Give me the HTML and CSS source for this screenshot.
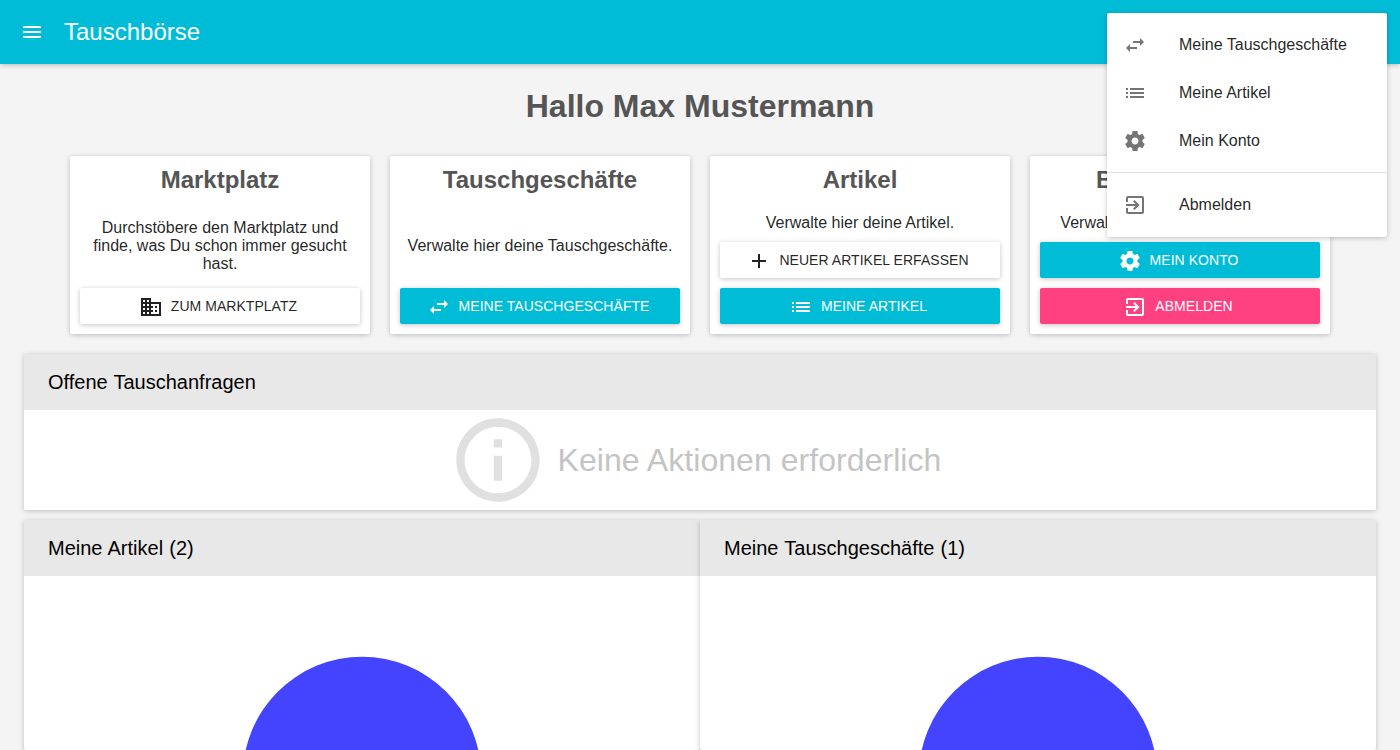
FILE: index.html
```html
<!DOCTYPE html>
<html lang="de">
<head>
<meta charset="utf-8">
<title>Tauschbörse</title>
<link rel="stylesheet" href="styles.css">
</head>
<body>
<svg class="sprite" aria-hidden="true">
  <symbol id="menu" viewBox="0 0 24 24"><path d="M3 18h18v-2H3v2zm0-5h18v-2H3v2zm0-7v2h18V6H3z"/></symbol>
  <symbol id="swap" viewBox="0 0 24 24"><path d="M6.99 11L3 15l3.99 4v-3H14v-2H6.99v-3zM21 9l-3.99-4v3H10v2h7.01v3L21 9z"/></symbol>
  <symbol id="list" viewBox="0 0 24 24"><path d="M3 13h2v-2H3v2zm0 4h2v-2H3v2zm0-8h2V7H3v2zm4 4h14v-2H7v2zm0 4h14v-2H7v2zM7 7v2h14V7H7z"/></symbol>
  <symbol id="settings" viewBox="0 0 24 24"><path d="M19.43 12.98c.04-.32.07-.64.07-.98s-.03-.66-.07-.98l2.11-1.65c.19-.15.24-.42.12-.64l-2-3.46c-.12-.22-.39-.3-.61-.22l-2.49 1c-.52-.4-1.08-.73-1.69-.98l-.38-2.65C14.46 2.18 14.25 2 14 2h-4c-.25 0-.46.18-.49.42l-.38 2.65c-.61.25-1.17.59-1.69.98l-2.49-1c-.23-.09-.49 0-.61.22l-2 3.46c-.13.22-.07.49.12.64l2.11 1.65c-.04.32-.07.65-.07.98s.03.66.07.98l-2.11 1.65c-.19.15-.24.42-.12.64l2 3.46c.12.22.39.3.61.22l2.49-1c.52.4 1.08.73 1.69.98l.38 2.65c.03.24.24.42.49.42h4c.25 0 .46-.18.49-.42l.38-2.65c.61-.25 1.17-.59 1.69-.98l2.49 1c.23.09.49 0 .61-.22l2-3.46c.12-.22.07-.49-.12-.64l-2.11-1.65zM12 15.5c-1.93 0-3.5-1.57-3.5-3.5s1.57-3.5 3.5-3.5 3.5 1.57 3.5 3.5-1.57 3.5-3.5 3.5z"/></symbol>
  <symbol id="exit" viewBox="0 0 24 24"><path d="M10.09 15.59L11.5 17l5-5-5-5-1.41 1.41L12.67 11H3v2h9.67l-2.58 2.59zM19 3H5c-1.11 0-2 .9-2 2v4h2V5h14v14H5v-4H3v4c0 1.1.89 2 2 2h14c1.1 0 2-.9 2-2V5c0-1.1-.9-2-2-2z"/></symbol>
  <symbol id="business" viewBox="0 0 24 24"><path d="M12 7V3H2v18h20V7H12zM6 19H4v-2h2v2zm0-4H4v-2h2v2zm0-4H4V9h2v2zm0-4H4V5h2v2zm4 12H8v-2h2v2zm0-4H8v-2h2v2zm0-4H8V9h2v2zm0-4H8V5h2v2zm10 12h-8v-2h2v-2h-2v-2h2v-2h-2V9h8v10zm-2-8h-2v2h2v-2zm0 4h-2v2h2v-2z"/></symbol>
  <symbol id="add" viewBox="0 0 24 24"><path d="M19 13h-6v6h-2v-6H5v-2h6V5h2v6h6v2z"/></symbol>
  <symbol id="info" viewBox="0 0 24 24"><path d="M11 17h2v-6h-2v6zm1-15C6.48 2 2 6.48 2 12s4.480 10 10 10 10-4.480 10-10S17.520 2 12 2zm0 18c-4.410 0-8-3.590-8-8s3.590-8 8-8 8 3.590 8 8-3.590 8-8 8zM11 9h2V7h-2v2z"/></symbol>
</svg>

<header class="appbar">
  <svg class="icon"><use href="#menu"/></svg>
  <span class="appbar-title">Tauschbörse</span>
</header>

<main>
  <h1 class="greeting">Hallo Max Mustermann</h1>

  <section class="cards">
    <article class="card">
      <h2 class="card-title">Marktplatz</h2>
      <p class="card-text">Durchstöbere den Marktplatz und finde, was Du schon immer gesucht hast.</p>
      <div class="actions">
        <a class="button"><svg class="icon"><use href="#business"/></svg><span>ZUM MARKTPLATZ</span></a>
      </div>
    </article>
    <article class="card">
      <h2 class="card-title">Tauschgeschäfte</h2>
      <p class="card-text">Verwalte hier deine Tauschgeschäfte.</p>
      <div class="actions">
        <a class="button primary"><svg class="icon"><use href="#swap"/></svg><span>MEINE TAUSCHGESCHÄFTE</span></a>
      </div>
    </article>
    <article class="card">
      <h2 class="card-title">Artikel</h2>
      <p class="card-text">Verwalte hier deine Artikel.</p>
      <div class="actions">
        <a class="button"><svg class="icon"><use href="#add"/></svg><span>NEUER ARTIKEL ERFASSEN</span></a>
        <a class="button primary"><svg class="icon"><use href="#list"/></svg><span>MEINE ARTIKEL</span></a>
      </div>
    </article>
    <article class="card">
      <h2 class="card-title">Benutzerkonto</h2>
      <p class="card-text">Verwalte hier dein Benutzerkonto.</p>
      <div class="actions">
        <a class="button primary"><svg class="icon"><use href="#settings"/></svg><span>MEIN KONTO</span></a>
        <a class="button secondary"><svg class="icon"><use href="#exit"/></svg><span>ABMELDEN</span></a>
      </div>
    </article>
  </section>

  <section class="panels">
    <article class="panel wide">
      <h3 class="panel-title">Offene Tauschanfragen</h3>
      <div class="empty">
        <svg class="empty-icon"><use href="#info"/></svg>
        <span>Keine Aktionen erforderlich</span>
      </div>
    </article>
    <article class="panel">
      <h3 class="panel-title">Meine Artikel (2)</h3>
      <div class="chart"><svg class="pie" viewBox="0 0 240 240"><circle cx="120" cy="120" r="119.200"/></svg></div>
    </article>
    <article class="panel">
      <h3 class="panel-title">Meine Tauschgeschäfte (1)</h3>
      <div class="chart"><svg class="pie" viewBox="0 0 240 240"><circle cx="120" cy="120" r="119.200"/></svg></div>
    </article>
  </section>
</main>

<nav class="menu">
  <a class="menu-item"><svg class="icon"><use href="#swap"/></svg><span>Meine Tauschgeschäfte</span></a>
  <a class="menu-item"><svg class="icon"><use href="#list"/></svg><span>Meine Artikel</span></a>
  <a class="menu-item"><svg class="icon"><use href="#settings"/></svg><span>Mein Konto</span></a>
  <hr class="divider">
  <a class="menu-item"><svg class="icon"><use href="#exit"/></svg><span>Abmelden</span></a>
</nav>
</body>
</html>
```

FILE: styles.css
```css
* {
  box-sizing: border-box;
}

body {
  margin: 0;
  height: 750px;
  overflow: hidden;
  background: #f4f4f4;
  color: rgba(0, 0, 0, 0.87);
  font: 16px/18px "Liberation Sans", Arial, sans-serif;
}

h1, h2, h3, p {
  margin: 0;
}

.sprite {
  display: none;
}

.icon {
  width: 24px;
  height: 24px;
  flex: none;
  fill: currentColor;
}

.appbar {
  display: flex;
  align-items: center;
  gap: 20px;
  height: 64px;
  padding: 0 20px;
  background: #00bcd7;
  color: #fff;
  box-shadow: 0 1px 6px rgba(0, 0, 0, 0.12), 0 1px 4px rgba(0, 0, 0, 0.12);
}

.appbar-title {
  font-size: 24px;
  line-height: 64px;
}

.greeting {
  padding-top: 24px;
  color: #555;
  font-size: 32px;
  line-height: 37px;
  text-align: center;
}

.cards {
  display: flex;
  justify-content: center;
  gap: 20px;
  margin-top: 31px;
}

.card {
  display: flex;
  flex-direction: column;
  width: 300px;
  height: 178px;
  padding: 10px;
  background: #fff;
  border-radius: 2px;
  box-shadow: 0 1px 6px rgba(0, 0, 0, 0.12), 0 1px 4px rgba(0, 0, 0, 0.12);
  text-align: center;
}

.card-title {
  height: 36px;
  color: #555;
  font-size: 24px;
  line-height: 28px;
}

.card-text {
  display: flex;
  flex: 1;
  flex-direction: column;
  justify-content: center;
  padding-top: 2px;
}

.actions {
  display: grid;
  gap: 10px;
}

.button {
  display: flex;
  align-items: center;
  justify-content: center;
  gap: 8px;
  height: 36px;
  padding: 0 16px 0 12px;
  background: #fff;
  border-radius: 2px;
  box-shadow: 0 1px 6px rgba(0, 0, 0, 0.12), 0 1px 4px rgba(0, 0, 0, 0.12);
  font-size: 14px;
  letter-spacing: 0.04px;
  line-height: 36px;
}

.button .icon {
  margin-top: 2px;
}

.primary {
  background: #00bcd7;
  color: #fff;
}

.secondary {
  background: #ff4081;
  color: #fff;
}

.panels {
  display: grid;
  grid-template-columns: 1fr 1fr;
  row-gap: 10px;
  margin: 20px 24px 0;
}

.panel {
  background: #fff;
  border-radius: 2px;
  box-shadow: 0 1px 6px rgba(0, 0, 0, 0.12), 0 1px 4px rgba(0, 0, 0, 0.12);
}

.wide {
  grid-column: 1 / -1;
}

.panel-title {
  padding-left: 24px;
  background: #e8e8e8;
  color: #000;
  font-size: 20px;
  font-weight: 400;
  line-height: 56px;
  word-spacing: 0.6px;
}

.empty {
  display: flex;
  align-items: center;
  justify-content: center;
  gap: 10px;
  height: 100px;
  padding-right: 11px;
  color: #c4c4c4;
  font-size: 32px;
  letter-spacing: 0.05px;
  line-height: 37px;
}

.empty-icon {
  width: 100px;
  height: 100px;
  fill: #e0e0e0;
}

.chart {
  display: flex;
  justify-content: center;
  height: 174px;
  padding-top: 80px;
  overflow: hidden;
}

.pie {
  width: 240px;
  height: 240px;
  flex: none;
  fill: #44f;
}

.menu {
  position: absolute;
  top: 13px;
  right: 13px;
  width: 280px;
  padding: 8px 0;
  background: #fff;
  border-radius: 2px;
  box-shadow: 0 1px 6px rgba(0, 0, 0, 0.12), 0 1px 4px rgba(0, 0, 0, 0.12);
}

.menu-item {
  display: flex;
  align-items: center;
  gap: 32px;
  height: 48px;
  padding-left: 16px;
}

.menu-item .icon {
  fill: #757575;
}

.divider {
  height: 1px;
  margin: 7px 0 8px;
  border: 0;
  background: #e0e0e0;
}
```
